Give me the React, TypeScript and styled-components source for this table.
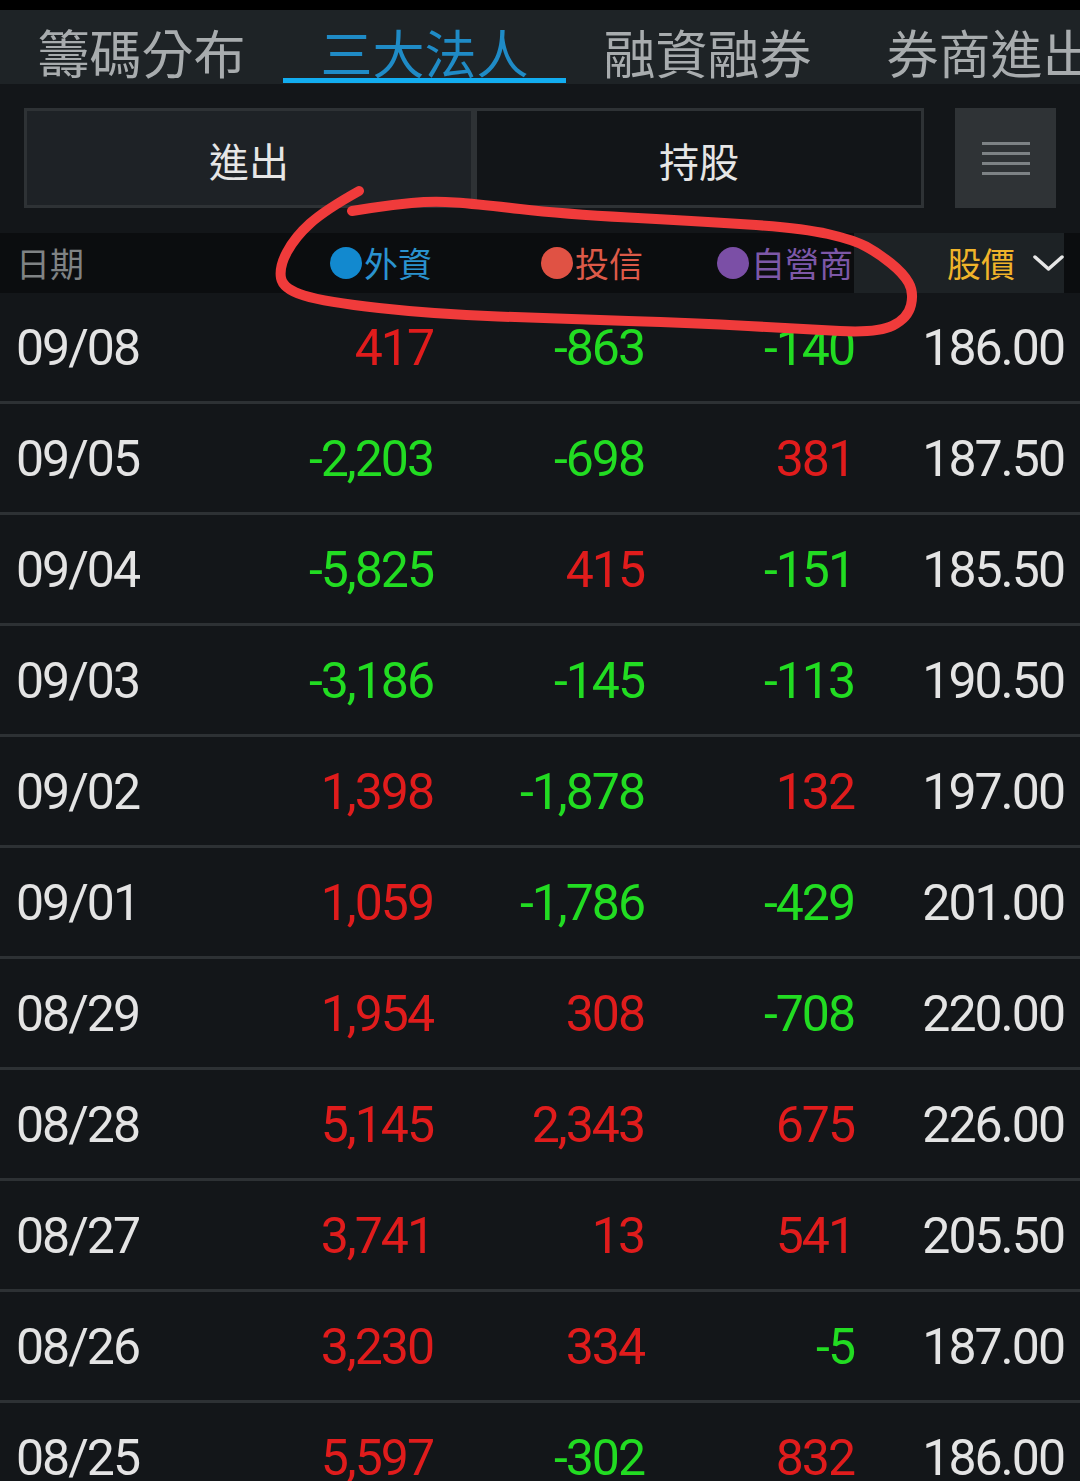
import React from "react";
import styled, { createGlobalStyle } from "styled-components";

const GlobalStyle = createGlobalStyle`
  html, body {
    margin: 0;
    padding: 0;
    background: #131619;
    overflow: hidden;
  }
  body {
    font-family: Roboto, "Noto Sans CJK TC", sans-serif;
  }
  * { box-sizing: border-box; }
`;

const GRID = "207px 210px 211px 210px 210px";
const CJK = `"Noto Sans CJK TC", "Noto Sans", sans-serif`;

const Page = styled.div`
  position: relative;
  width: 1080px;
  height: 1481px;
  overflow: hidden;
  background: #131619;
`;

const StatusStrip = styled.div`
  height: 10px;
  background: #000;
`;

const TabBar = styled.nav`
  display: flex;
  height: 74px;
  background: #1e2326;
`;

const Tab = styled.div<{ $active?: boolean }>`
  flex: 0 0 283px;
  height: 74px;
  padding-top: 10px;
  text-align: center;
  white-space: nowrap;
  font-family: ${CJK};
  font-size: 52px;
  line-height: 63px;
  color: ${(p) => (p.$active ? "#1f8bc6" : "#a8acae")};
  border-bottom: 1px solid transparent;
  box-shadow: ${(p) => (p.$active ? "inset 0 -5px 0 #12adf0" : "none")};
`;

const Controls = styled.div`
  display: flex;
  gap: 31px;
  padding: 24px 24px 25px;
`;

const Segments = styled.div`
  display: flex;
  flex: 1;
`;

const Segment = styled.button<{ $active?: boolean }>`
  flex: 1;
  height: 100px;
  border: 3px solid #2e3235;
  background: ${(p) => (p.$active ? "#1e2226" : "#121518")};
  color: #e6e6e6;
  font-family: ${CJK};
  font-size: 40px;
  line-height: 1;
  padding: 4px 0 0;
  cursor: pointer;
`;

const MenuButton = styled.button`
  width: 101px;
  height: 100px;
  background: #2f3336;
  border: none;
  padding: 0;
  display: flex;
  flex-direction: column;
  align-items: center;
  justify-content: center;
  gap: 7px;
`;

const MenuLine = styled.span`
  display: block;
  width: 48px;
  height: 3px;
  background: #7d8285;
`;

const HeaderRow = styled.div`
  display: grid;
  grid-template-columns: ${GRID};
  padding: 0 16px;
  height: 60px;
  background: #0b0d0f;
  font-family: ${CJK};
  font-size: 34px;
  line-height: 1;
`;

const HeaderCell = styled.div<{ $right?: boolean; $color: string; $highlight?: boolean }>`
  display: flex;
  align-items: center;
  justify-content: ${(p) => (p.$right ? "flex-end" : "flex-start")};
  gap: ${(p) => (p.$highlight ? "18px" : "2px")};
  padding-right: ${(p) => (p.$highlight ? "0" : p.$right ? "1px" : "0")};
  color: ${(p) => p.$color};
  background: ${(p) => (p.$highlight ? "#1d2225" : "transparent")};
  white-space: nowrap;
`;

const Dot = styled.span<{ $color: string }>`
  display: inline-block;
  width: 32px;
  height: 32px;
  border-radius: 50%;
  background: ${(p) => p.$color};
`;

const Row = styled.div`
  display: grid;
  grid-template-columns: ${GRID};
  align-items: center;
  padding: 2px 16px 0;
  height: 111px;
  border-bottom: 3px solid #2d3134;
  font-family: Roboto, "Noto Sans", sans-serif;
  font-size: 50px;
  line-height: 1;
  letter-spacing: -2px;
`;

const Cell = styled.div<{ $tone: "up" | "down" | "plain"; $right?: boolean }>`
  text-align: ${(p) => (p.$right ? "right" : "left")};
  color: ${(p) =>
    p.$tone === "up" ? "#e01c1c" : p.$tone === "down" ? "#22dc22" : "#e4e4e4"};
`;

const Annotation = styled.svg`
  position: absolute;
  left: 0;
  top: 0;
  width: 1080px;
  height: 1481px;
  pointer-events: none;
`;

const rows: [string, string, string, string, string][] = [
  ["09/08", "417", "-863", "-140", "186.00"],
  ["09/05", "-2,203", "-698", "381", "187.50"],
  ["09/04", "-5,825", "415", "-151", "185.50"],
  ["09/03", "-3,186", "-145", "-113", "190.50"],
  ["09/02", "1,398", "-1,878", "132", "197.00"],
  ["09/01", "1,059", "-1,786", "-429", "201.00"],
  ["08/29", "1,954", "308", "-708", "220.00"],
  ["08/28", "5,145", "2,343", "675", "226.00"],
  ["08/27", "3,741", "13", "541", "205.50"],
  ["08/26", "3,230", "334", "-5", "187.00"],
  ["08/25", "5,597", "-302", "832", "186.00"],
];

const tone = (v: string) => (v.startsWith("-") ? "down" : "up");

const loop: [number, number][] = [
  [359, 191],
  [325, 210],
  [295, 237],
  [279, 267],
  [283, 289],
  [325, 302],
  [433, 314],
  [563, 319],
  [694, 323],
  [802, 329],
  [878, 333],
  [908, 318],
  [914, 292],
  [903, 273],
  [878, 253],
  [854, 240],
  [802, 228],
  [694, 221],
  [563, 214],
  [477, 204],
  [433, 201],
  [390, 205],
  [352, 211],
];

function smoothPath(pts: [number, number][]) {
  let d = `M${pts[0][0]} ${pts[0][1]}`;
  for (let i = 1; i < pts.length - 1; i++) {
    const [x, y] = pts[i];
    const [nx, ny] = pts[i + 1];
    d += ` Q${x} ${y} ${(x + nx) / 2} ${(y + ny) / 2}`;
  }
  const last = pts[pts.length - 1];
  d += ` L${last[0]} ${last[1]}`;
  return d;
}

export default function App() {
  return (
    <Page>
      <GlobalStyle />
      <StatusStrip />
      <TabBar>
        <Tab>籌碼分布</Tab>
        <Tab $active>三大法人</Tab>
        <Tab>融資融券</Tab>
        <Tab>券商進出</Tab>
      </TabBar>
      <Controls>
        <Segments>
          <Segment $active>進出</Segment>
          <Segment>持股</Segment>
        </Segments>
        <MenuButton aria-label="menu">
          <MenuLine />
          <MenuLine />
          <MenuLine />
          <MenuLine />
        </MenuButton>
      </Controls>
      <HeaderRow>
        <HeaderCell $color="#7f8385">日期</HeaderCell>
        <HeaderCell $right $color="#2a93cf">
          <Dot $color="#1289cf" />
          外資
        </HeaderCell>
        <HeaderCell $right $color="#dd5a48">
          <Dot $color="#e05244" />
          投信
        </HeaderCell>
        <HeaderCell $right $color="#7d58a8">
          <Dot $color="#7b4fa6" />
          自營商
        </HeaderCell>
        <HeaderCell $right $highlight $color="#f0b42a">
          股價
          <svg width="31" height="16" viewBox="0 0 31 16">
            <polyline
              points="2,2 15.5,14 29,2"
              fill="none"
              stroke="#e6e6e6"
              strokeWidth="3.5"
              strokeLinecap="round"
              strokeLinejoin="round"
            />
          </svg>
        </HeaderCell>
      </HeaderRow>
      {rows.map((r) => (
        <Row key={r[0]}>
          <Cell $tone="plain">{r[0]}</Cell>
          <Cell $right $tone={tone(r[1])}>{r[1]}</Cell>
          <Cell $right $tone={tone(r[2])}>{r[2]}</Cell>
          <Cell $right $tone={tone(r[3])}>{r[3]}</Cell>
          <Cell $right $tone="plain">{r[4]}</Cell>
        </Row>
      ))}
      <Annotation viewBox="0 0 1080 1481">
        <path
          d={smoothPath(loop)}
          fill="none"
          stroke="#f03b3b"
          strokeWidth="10"
          strokeLinecap="round"
          strokeLinejoin="round"
        />
      </Annotation>
    </Page>
  );
}
